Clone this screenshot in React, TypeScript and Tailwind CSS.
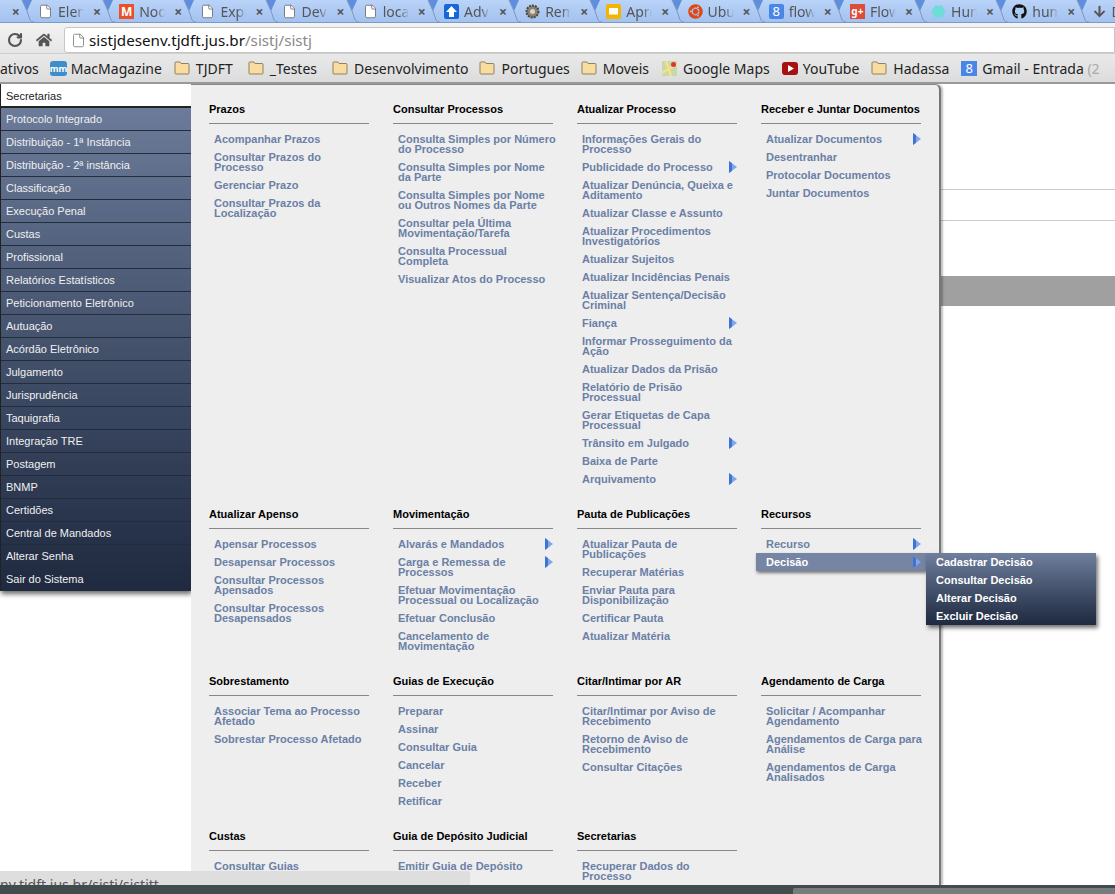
import { File, RotateCw } from "lucide-react";
import { FaGithub, FaHome, FaUbuntu, FaArrowDown } from "react-icons/fa";

type Item = { t: string; arrow?: boolean; active?: boolean };
type Group = { title: string; items: Item[] };

const sideItems = [
  "Protocolo Integrado",
  "Distribuição - 1ª Instância",
  "Distribuição - 2ª instância",
  "Classificação",
  "Execução Penal",
  "Custas",
  "Profissional",
  "Relatórios Estatísticos",
  "Peticionamento Eletrônico",
  "Autuação",
  "Acórdão Eletrônico",
  "Julgamento",
  "Jurisprudência",
  "Taquigrafia",
  "Integração TRE",
  "Postagem",
  "BNMP",
  "Certidões",
  "Central de Mandados",
  "Alterar Senha",
  "Sair do Sistema",
];

const groups: Group[] = [
  {
    title: "Prazos",
    items: [
      { t: "Acompanhar Prazos" },
      { t: "Consultar Prazos do\nProcesso" },
      { t: "Gerenciar Prazo" },
      { t: "Consultar Prazos da\nLocalização" },
    ],
  },
  {
    title: "Consultar Processos",
    items: [
      { t: "Consulta Simples por Número\ndo Processo" },
      { t: "Consulta Simples por Nome\nda Parte" },
      { t: "Consulta Simples por Nome\nou Outros Nomes da Parte" },
      { t: "Consultar pela Última\nMovimentação/Tarefa" },
      { t: "Consulta Processual\nCompleta" },
      { t: "Visualizar Atos do Processo" },
    ],
  },
  {
    title: "Atualizar Processo",
    items: [
      { t: "Informações Gerais do\nProcesso" },
      { t: "Publicidade do Processo", arrow: true },
      { t: "Atualizar Denúncia, Queixa e\nAditamento" },
      { t: "Atualizar Classe e Assunto" },
      { t: "Atualizar Procedimentos\nInvestigatórios" },
      { t: "Atualizar Sujeitos" },
      { t: "Atualizar Incidências Penais" },
      { t: "Atualizar Sentença/Decisão\nCriminal" },
      { t: "Fiança", arrow: true },
      { t: "Informar Prosseguimento da\nAção" },
      { t: "Atualizar Dados da Prisão" },
      { t: "Relatório de Prisão\nProcessual" },
      { t: "Gerar Etiquetas de Capa\nProcessual" },
      { t: "Trânsito em Julgado", arrow: true },
      { t: "Baixa de Parte" },
      { t: "Arquivamento", arrow: true },
    ],
  },
  {
    title: "Receber e Juntar Documentos",
    items: [
      { t: "Atualizar Documentos", arrow: true },
      { t: "Desentranhar" },
      { t: "Protocolar Documentos" },
      { t: "Juntar Documentos" },
    ],
  },
  {
    title: "Atualizar Apenso",
    items: [
      { t: "Apensar Processos" },
      { t: "Desapensar Processos" },
      { t: "Consultar Processos\nApensados" },
      { t: "Consultar Processos\nDesapensados" },
    ],
  },
  {
    title: "Movimentação",
    items: [
      { t: "Alvarás e Mandados", arrow: true },
      { t: "Carga e Remessa de\nProcessos", arrow: true },
      { t: "Efetuar Movimentação\nProcessual ou Localização" },
      { t: "Efetuar Conclusão" },
      { t: "Cancelamento de\nMovimentação" },
    ],
  },
  {
    title: "Pauta de Publicações",
    items: [
      { t: "Atualizar Pauta de\nPublicações" },
      { t: "Recuperar Matérias" },
      { t: "Enviar Pauta para\nDisponibilização" },
      { t: "Certificar Pauta" },
      { t: "Atualizar Matéria" },
    ],
  },
  {
    title: "Recursos",
    items: [
      { t: "Recurso", arrow: true },
      { t: "Decisão", arrow: true, active: true },
    ],
  },
  {
    title: "Sobrestamento",
    items: [
      { t: "Associar Tema ao Processo\nAfetado" },
      { t: "Sobrestar Processo Afetado" },
    ],
  },
  {
    title: "Guias de Execução",
    items: [
      { t: "Preparar" },
      { t: "Assinar" },
      { t: "Consultar Guia" },
      { t: "Cancelar" },
      { t: "Receber" },
      { t: "Retificar" },
    ],
  },
  {
    title: "Citar/Intimar por AR",
    items: [
      { t: "Citar/Intimar por Aviso de\nRecebimento" },
      { t: "Retorno de Aviso de\nRecebimento" },
      { t: "Consultar Citações" },
    ],
  },
  {
    title: "Agendamento de Carga",
    items: [
      { t: "Solicitar / Acompanhar\nAgendamento" },
      { t: "Agendamentos de Carga para\nAnálise" },
      { t: "Agendamentos de Carga\nAnalisados" },
    ],
  },
  { title: "Custas", items: [{ t: "Consultar Guias" }] },
  { title: "Guia de Depósito Judicial", items: [{ t: "Emitir Guia de Depósito" }] },
  { title: "Secretarias", items: [{ t: "Recuperar Dados do\nProcesso" }] },
];

const subItems = ["Cadastrar Decisão", "Consultar Decisão", "Alterar Decisão", "Excluir Decisão"];

const tabs = [
  { label: "s", icon: "none" },
  { label: "Elen", icon: "doc" },
  { label: "Nod", icon: "node" },
  { label: "Expr", icon: "doc" },
  { label: "Dev", icon: "doc" },
  { label: "loca", icon: "doc" },
  { label: "Adv", icon: "adv" },
  { label: "Rem", icon: "rem" },
  { label: "Apre", icon: "slides" },
  { label: "Ubu", icon: "ubuntu" },
  { label: "flow", icon: "google" },
  { label: "Flow", icon: "plus" },
  { label: "Hun", icon: "hun" },
  { label: "hum", icon: "github" },
  { label: "D", icon: "down" },
];

function Arrow() {
  return (
    <svg width="8" height="12" viewBox="0 0 8 12" className="shrink-0">
      <polygon points="0,0 8,6 0,12" fill="#7fa8ec" />
      <polygon points="0,0 3,2.2 3,9.8 0,12" fill="#3f74d6" />
    </svg>
  );
}

function Folder() {
  return (
    <svg width="16" height="14" viewBox="0 0 16 14" className="shrink-0 mr-[2px]">
      <path
        d="M1 3 V1.8 Q1 1 1.8 1 H6 L7 2.5 H14.2 Q15 2.5 15 3.3 V12 Q15 13 14 13 H2 Q1 13 1 12 Z"
        fill="#f9dca0"
        stroke="#8f8163"
      />
    </svg>
  );
}

function TabIcon({ kind }: { kind: string }) {
  if (kind === "none") return <span className="w-[15px] shrink-0" />;
  if (kind === "doc") return <File size={15} strokeWidth={1.3} className="shrink-0 text-[#666] fill-white" />;
  if (kind === "ubuntu") return <FaUbuntu size={15} className="shrink-0 text-[#dd4814]" />;
  if (kind === "github") return <FaGithub size={15} className="shrink-0 text-[#111]" />;
  if (kind === "down") return <FaArrowDown size={13} className="shrink-0 text-[#555]" />;
  if (kind === "node")
    return (
      <span className="w-[15px] h-[15px] shrink-0 bg-[#e9512a] text-white text-[12px] leading-[15px] font-bold text-center">
        M
      </span>
    );
  if (kind === "adv")
    return (
      <svg width="15" height="15" viewBox="0 0 15 15" className="shrink-0">
        <rect width="15" height="15" rx="2" fill="#1467d8" />
        <path d="M7.5 2 L13 8 H10 V13 H5 V8 H2 Z" fill="#fff" />
      </svg>
    );
  if (kind === "rem")
    return (
      <svg width="15" height="15" viewBox="0 0 15 15" className="shrink-0">
        <circle cx="7.5" cy="7.5" r="6" fill="#8a8272" stroke="#4c473e" strokeDasharray="2 1" strokeWidth="2" />
        <circle cx="7.5" cy="7.5" r="2.5" fill="#d8d4c8" />
      </svg>
    );
  if (kind === "slides")
    return (
      <svg width="15" height="15" viewBox="0 0 15 15" className="shrink-0">
        <rect width="15" height="15" rx="2" fill="#f4b400" />
        <rect x="3" y="4" width="9" height="6.5" fill="#fff" />
      </svg>
    );
  if (kind === "google")
    return (
      <span className="w-[15px] h-[15px] shrink-0 rounded-[2px] bg-[#4a86e8] text-white text-[13px] leading-[15px] text-center">
        8
      </span>
    );
  if (kind === "plus")
    return (
      <span className="w-[15px] h-[15px] shrink-0 bg-[#dd4b39] text-white text-[10px] leading-[15px] font-bold text-center">
        g+
      </span>
    );
  return (
    <svg width="15" height="15" viewBox="0 0 15 15" className="shrink-0">
      <path d="M4 1.5 H11 L14.5 7 L11.5 13.5 H4 L0.5 7 Z" fill="#6fdcd8" />
    </svg>
  );
}

function TabEdge() {
  return (
    <svg width="16" height="23" viewBox="0 0 16 23" className="shrink-0">
      <polygon points="3,0 13,0 8,11" fill="#5f8fdc" />
      <path d="M3 0 L8 11 L11 20 Q12 22 15 22" fill="none" stroke="#7d98c0" />
    </svg>
  );
}

function Bookmark({ label, icon, extra }: { label: React.ReactNode; icon?: React.ReactNode; extra?: string }) {
  return (
    <div className={`flex items-center gap-[4px] shrink-0 ${extra ?? ""}`}>
      {icon ?? <Folder />}
      <span>{label}</span>
    </div>
  );
}

function MenuGroup({ group }: { group: Group }) {
  return (
    <div className="w-[160px]">
      <h3 className="text-[11px] leading-[12px] font-bold text-black whitespace-nowrap pb-[8px] border-b border-[#888]">
        {group.title}
      </h3>
      <ul className="mt-[6px]">
        {group.items.map((item) => (
          <li
            key={item.t}
            className={
              item.active
                ? "relative flex justify-between items-start -mx-[5px] pl-[10px] pr-[5px] py-[4px] bg-[#7585a3] text-white shadow-[1px_2px_3px_rgba(0,0,0,0.5)]"
                : "relative flex justify-between items-start pl-[5px] py-[4px] text-[#6b80a6]"
            }
          >
            <span className="text-[11px] leading-[10px] font-bold whitespace-pre">{item.t}</span>
            {item.arrow && (
              <span className={item.active ? "absolute right-[5px] top-[3px]" : "absolute right-0 top-[3px]"}>
                <Arrow />
              </span>
            )}
            {item.active && (
              <div className="absolute left-[170px] top-0 w-[170px] py-0 bg-gradient-to-b from-[#6f7f9d] to-[#1f2a40] shadow-[2px_3px_4px_rgba(0,0,0,0.55)] z-10">
                {subItems.map((s) => (
                  <div key={s} className="h-[18px] pl-[10px] text-[11px] leading-[18px] font-bold text-white whitespace-nowrap">
                    {s}
                  </div>
                ))}
              </div>
            )}
          </li>
        ))}
      </ul>
    </div>
  );
}

export default function App() {
  return (
    <div className="w-[1115px] h-[894px] overflow-hidden flex flex-col bg-white font-['Liberation_Sans',Arial,sans-serif]">
      {/* tab strip */}
      <div className="h-[23px] shrink-0 flex bg-gradient-to-b from-[#bad3f8] to-[#a2c2f0] border-b border-[#7c9ac8] overflow-hidden pl-[19px] font-['Noto_Sans',sans-serif] text-[14px] text-[#555]">
        <div className="flex -ml-[81.2px] shrink-0">
          {tabs.map((tab) => (
            <div key={tab.label + tab.icon} className="flex items-center w-[81.2px] shrink-0 h-[23px]">
              <TabEdge />
              <div className="flex items-center pl-[3px] h-[22px] shrink-0">
                <TabIcon kind={tab.icon} />
                <span className="w-[26px] ml-[5px] overflow-hidden whitespace-nowrap leading-[22px] [mask-image:linear-gradient(90deg,#000_65%,transparent)]">
                  {tab.label}
                </span>
                <span className="w-[7px] ml-[9px] text-[14px] leading-[22px] font-bold text-[#555]">×</span>
              </div>
            </div>
          ))}
        </div>
      </div>

      {/* toolbar */}
      <div className="h-[31px] shrink-0 flex items-center bg-gradient-to-b from-[#f2f2f2] to-[#e6e6e6] border-b border-[#cfcfcf] pt-[4px] pl-[7px]">
        <RotateCw size={16} strokeWidth={3.2} className="text-[#555]" />
        <FaHome size={16} className="ml-[13px] text-[#555]" />
        <div className="ml-[12px] flex-1 h-[26px] bg-white border border-[#c6c6c6] rounded-l-[3px] flex items-center pl-[6px] font-['Noto_Sans',sans-serif]">
          <File size={15} strokeWidth={1.3} className="text-[#777]" />
          <span className="ml-[3px] text-[#111] text-[15.2px]">
            sistjdesenv.tjdft.jus.br<span className="text-[#888]">/sistj/sistj</span>
          </span>
        </div>
      </div>

      {/* bookmarks */}
      <div className="h-[30px] shrink-0 flex items-center gap-[11px] bg-gradient-to-b from-[#e9e9e9] to-[#dcdcdc] border-b-2 border-[#999] text-[14px] text-[#222] font-['Noto_Sans',sans-serif] overflow-hidden whitespace-nowrap">
        <span className="shrink-0">ativos</span>
        <Bookmark
          label="MacMagazine"
          extra="mr-[1px]"
          icon={
            <span className="w-[17px] h-[15px] rounded-[3px] bg-[#3d8fc9] text-white text-[9px] leading-[15px] text-center font-bold">
              mm
            </span>
          }
        />
        <Bookmark label="TJDFT" extra="mr-[4px]" />
        <Bookmark label="_Testes" extra="mr-[4px]" />
        <Bookmark label="Desenvolvimento" />
        <Bookmark label="Portugues" />
        <Bookmark label="Moveis" extra="mr-[2px]" />
        <Bookmark
          label="Google Maps"
          extra="mr-[1px]"
          icon={
            <svg width="15" height="15" viewBox="0 0 15 15" className="shrink-0 mr-[2px]">
              <rect width="15" height="15" fill="#c9d8a8" />
              <path d="M0 12 L15 3 M4 0 L9 15" stroke="#f3e28a" strokeWidth="2.5" />
              <circle cx="11.5" cy="3.5" r="2.5" fill="#d33" />
            </svg>
          }
        />
        <Bookmark
          label="YouTube"
          extra="mr-[1px]"
          icon={
            <svg width="16" height="13" viewBox="0 0 16 13" className="shrink-0 mr-[1px]">
              <rect width="16" height="13" rx="3" fill="#a81111" />
              <polygon points="6,3 12,6.5 6,10" fill="#fff" />
            </svg>
          }
        />
        <Bookmark label="Hadassa" extra="mr-[1px]" />
        <Bookmark
          label={
            <>
              Gmail - Entrada <span className="text-[#aaa]">(2</span>
            </>
          }
          icon={
            <span className="w-[16px] h-[15px] shrink-0 mr-[1px] bg-[#4a86e8] text-white text-[13px] leading-[15px] text-center">
              8
            </span>
          }
        />
      </div>

      {/* page */}
      <div className="relative flex-1 overflow-hidden">
        <div className="h-[106px] border-b border-[#ccc]" />
        <div className="h-[31px] border-b border-[#ccc]" />
        <div className="h-[55px]" />
        <div className="h-[30px] bg-[#a0a0a0]" />

        {/* menu */}
        <div className="absolute left-0 top-0 flex items-start">
          <div className="w-[191px] border-l border-[#222] shadow-[1px_3px_5px_rgba(0,0,0,0.6)] text-[11px] bg-white">
            <div className="h-[24px] pl-[5px] leading-[24px] text-[#222] border-b-2 border-[#222] bg-white">Secretarias</div>
            <div className="bg-gradient-to-b from-[#6b7b99] to-[#1f2a40]">
              {sideItems.map((s) => (
                <div key={s} className="h-[23px] pl-[5px] leading-[22px] text-[#f0f0f0] border-b border-[#222c3a] whitespace-nowrap">
                  {s}
                </div>
              ))}
            </div>
          </div>
          <div className="w-[750px] h-[801px] bg-[#eeeeee] border-t border-[#888] border-r-[2px] border-r-[#777] rounded-tr-[6px] pt-[18px] pl-[18px] shadow-[2px_0_2px_rgba(0,0,0,0.25)]">
            <div className="grid grid-cols-[repeat(4,184px)] gap-y-[20px]">
              {groups.map((g) => (
                <MenuGroup key={g.title + g.items[0].t} group={g} />
              ))}
            </div>
          </div>
        </div>

        {/* status bubble */}
        <div className="absolute left-0 bottom-0 w-[470px] h-[14px] bg-[#dedede] rounded-tr-[3px] overflow-hidden text-[14px] leading-[28px] text-[#555] font-['Noto_Sans',sans-serif] whitespace-nowrap">
          <span className="inline-block">nv.tjdft.jus.br/sistj/sistjtt</span>
        </div>
      </div>

      {/* scrollbar */}
      <div className="h-[9px] shrink-0 bg-[#434c4c] pt-[3px] pl-[793px]">
        <div className="h-[6px] bg-[#777c7c] rounded-tl-[2px]" />
      </div>
    </div>
  );
}
